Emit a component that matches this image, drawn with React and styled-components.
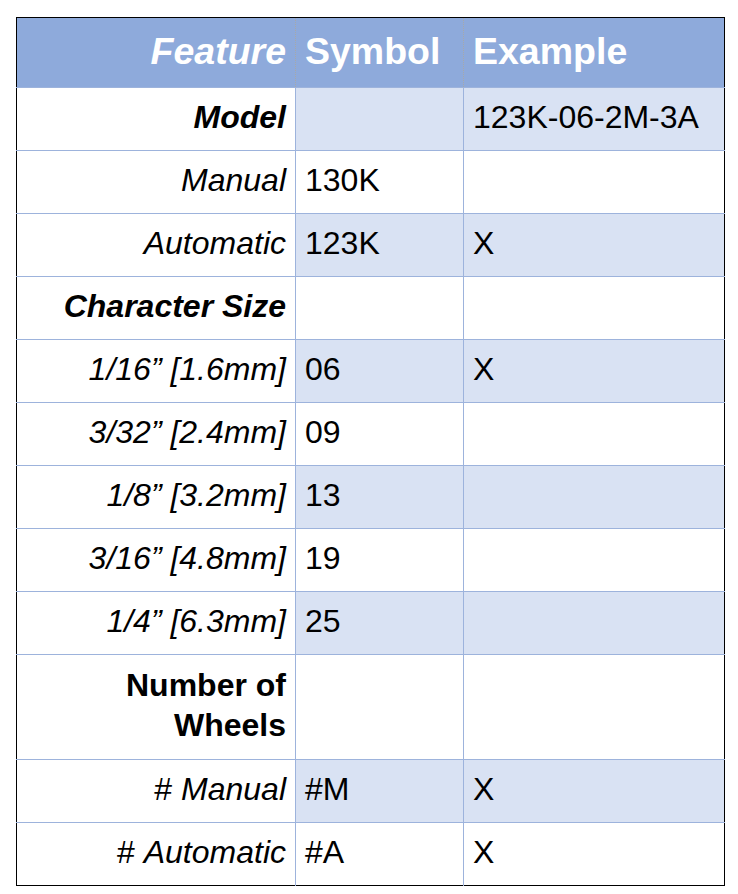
import styled, { createGlobalStyle } from 'styled-components';

const GlobalStyle = createGlobalStyle`
  body {
    margin: 0;
    background: #fff;
    font-family: "Liberation Sans", Arial, sans-serif;
  }
`;

const Page = styled.div`
  padding: 17px 0 0 16px;
`;

const Frame = styled.div`
  position: relative;
  width: 708px;

  &::before,
  &::after {
    content: '';
    position: absolute;
    bottom: -10px;
    height: 10px;
    border-left: 1px dashed #c8c8c8;
  }

  &::before {
    left: 0;
  }

  &::after {
    right: 1px;
  }
`;

const Table = styled.table`
  width: 708px;
  border-collapse: collapse;
  table-layout: fixed;
  border: 1.5px solid #000;
  font-size: 32px;
  color: #000;
`;

const HeadCell = styled.th`
  height: 67px;
  padding: 0 9px 2px;
  background: #8eaadb;
  color: #fff;
  font-size: 37.5px;
  font-weight: bold;
  font-style: ${(props) => (props.$italic ? 'italic' : 'normal')};
  text-align: ${(props) => props.$align || 'left'};
  border-left: 1px dotted #a8a8a8;

  &:first-child {
    border-left: none;
  }
`;

const Row = styled.tr`
  border-top: 1px solid #9db3dc;
`;

const Label = styled.td`
  height: 59px;
  padding: ${(props) => (props.$tall ? '10px 9px 14px' : '0 9px 3px')};
  line-height: ${(props) => (props.$tall ? '40px' : 'normal')};
  text-align: right;
  vertical-align: middle;
  background: #fff;
  font-style: ${(props) => (props.$upright ? 'normal' : 'italic')};
  font-weight: ${(props) => (props.$bold ? 'bold' : 'normal')};
  border-right: 1px solid #9db3dc;
`;

const Cell = styled.td`
  height: 59px;
  padding: 0 9px 3px;
  vertical-align: middle;
  background: ${(props) => (props.$band ? '#d9e2f3' : '#fff')};
  border-right: 1px solid #9db3dc;

  &:last-child {
    border-right: none;
  }
`;

const Hash = styled.span`
  font-style: normal;
`;

const rows = [
  { label: 'Model', bold: true, symbol: '', example: '123K-06-2M-3A' },
  { label: 'Manual', symbol: '130K', example: '' },
  { label: 'Automatic', symbol: '123K', example: 'X' },
  { label: 'Character Size', bold: true, symbol: '', example: '' },
  { label: '1/16” [1.6mm]', symbol: '06', example: 'X' },
  { label: '3/32” [2.4mm]', symbol: '09', example: '' },
  { label: '1/8” [3.2mm]', symbol: '13', example: '' },
  { label: '3/16” [4.8mm]', symbol: '19', example: '' },
  { label: '1/4” [6.3mm]', symbol: '25', example: '' },
  { label: 'Number of Wheels', bold: true, upright: true, tall: true, symbol: '', example: '' },
  { label: 'Manual', hash: true, symbol: '#M', example: 'X' },
  { label: 'Automatic', hash: true, symbol: '#A', example: 'X' },
];

export default function App() {
  return (
    <Page>
      <GlobalStyle />
      <Frame>
        <Table>
          <colgroup>
            <col style={{ width: 279 }} />
            <col style={{ width: 168 }} />
            <col style={{ width: 261 }} />
          </colgroup>
          <thead>
            <tr>
              <HeadCell $italic $align="right">Feature</HeadCell>
              <HeadCell>Symbol</HeadCell>
              <HeadCell>Example</HeadCell>
            </tr>
          </thead>
          <tbody>
            {rows.map((row, i) => (
              <Row key={i}>
                <Label $bold={row.bold} $upright={row.upright} $tall={row.tall}>
                  {row.tall ? (
                    <>
                      Number of
                      <br />
                      Wheels
                    </>
                  ) : null}
                  {row.hash ? <Hash># </Hash> : null}
                  {row.tall ? null : row.label}
                </Label>
                <Cell $band={i % 2 === 0}>{row.symbol}</Cell>
                <Cell $band={i % 2 === 0}>{row.example}</Cell>
              </Row>
            ))}
          </tbody>
        </Table>
      </Frame>
    </Page>
  );
}
